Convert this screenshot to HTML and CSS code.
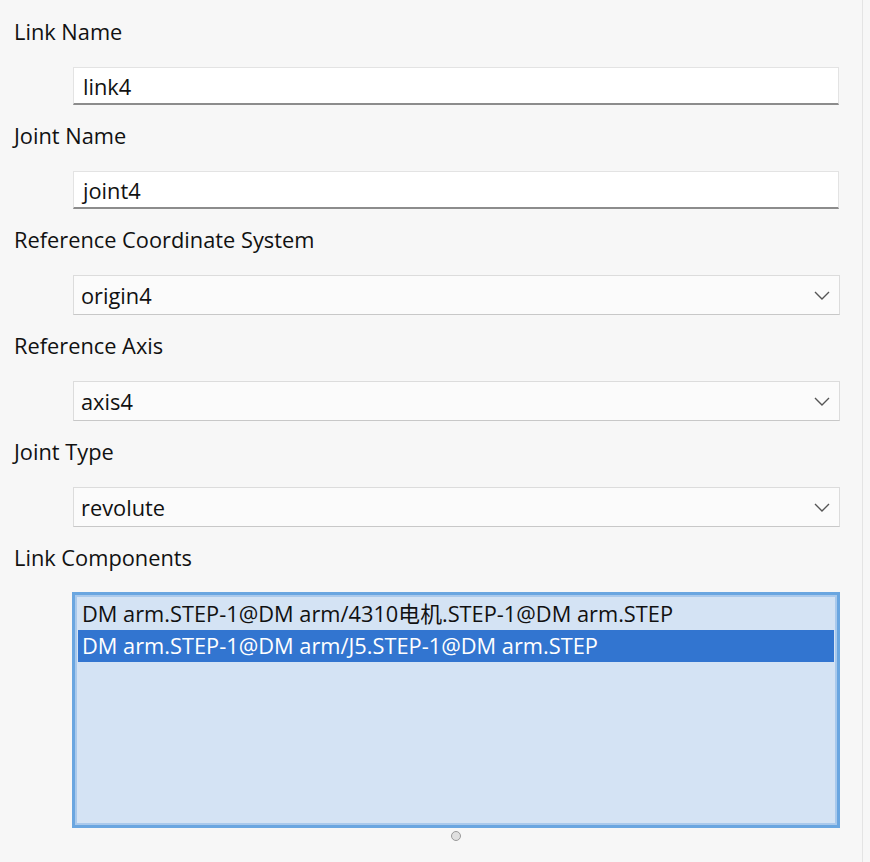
FILE: index.html
```html
<!DOCTYPE html>
<html>
<head>
<meta charset="utf-8">
<link rel="stylesheet" href="styles.css">
</head>
<body>
<div class="panel">
  <div class="field">
    <div class="label">Link Name</div>
    <div class="input">link4</div>
  </div>
  <div class="field">
    <div class="label">Joint Name</div>
    <div class="input">joint4</div>
  </div>
  <div class="field">
    <div class="label">Reference Coordinate System</div>
    <div class="select"><span>origin4</span><svg class="chev" width="16" height="9" viewBox="0 0 16 9"><path d="M1 1 L8 8 L15 1" fill="none" stroke="#555" stroke-width="1.4"/></svg></div>
  </div>
  <div class="field">
    <div class="label">Reference Axis</div>
    <div class="select"><span>axis4</span><svg class="chev" width="16" height="9" viewBox="0 0 16 9"><path d="M1 1 L8 8 L15 1" fill="none" stroke="#555" stroke-width="1.4"/></svg></div>
  </div>
  <div class="field">
    <div class="label">Joint Type</div>
    <div class="select"><span>revolute</span><svg class="chev" width="16" height="9" viewBox="0 0 16 9"><path d="M1 1 L8 8 L15 1" fill="none" stroke="#555" stroke-width="1.4"/></svg></div>
  </div>
  <div class="field">
    <div class="label">Link Components</div>
    <div class="list">
      <div class="row">DM arm.STEP-1@DM arm/4310电机.STEP-1@DM arm.STEP</div>
      <div class="row selected">DM arm.STEP-1@DM arm/J5.STEP-1@DM arm.STEP</div>
    </div>
    <div class="handle-wrap"><div class="handle"></div></div>
  </div>
</div>
</body>
</html>
```
FILE: styles.css
```css
html, body {
  margin: 0;
  padding: 0;
  background: #f7f7f7;
}
body {
  font-family: "Open Sans", "Noto Sans", "Noto Sans CJK SC", sans-serif;
  font-size: 21.8px;
  color: #111111;
  width: 870px;
  height: 862px;
  overflow: hidden;
}
.panel {
  width: 863px;
  height: 862px;
  border-right: 1px solid #e4e4e4;
  box-sizing: border-box;
  padding: 18px 0 0 14px;
  display: flex;
  flex-direction: column;
  gap: 17px;
}
.field {
  display: flex;
  flex-direction: column;
}
.label {
  height: 28px;
  line-height: 28px;
  margin-bottom: 21px;
}
.input, .select {
  margin-left: 59px;
  width: 766px;
  box-sizing: border-box;
  background: #ffffff;
  padding-left: 9px;
  display: flex;
  align-items: center;
}
.input {
  height: 38px;
  border: 1px solid #e3e3e3;
  border-bottom: 2px solid #8c8c8c;
  padding-top: 1px;
}
.select {
  height: 40px;
  width: 767px;
  border: 1px solid #dcdcdc;
  border-bottom-color: #c8c8c8;
  background: #fbfbfb;
  justify-content: space-between;
  padding-right: 9px;
  padding-left: 7px;
}
.list {
  margin-left: 58px;
  width: 768px;
  height: 236px;
  box-sizing: border-box;
  border: 3px solid #6aa6e0;
  box-shadow: inset 0 0 0 2px #a9c9ec;
  background: #d4e3f4;
  padding: 3px 3px;
  margin-top: -1px;
}
.row {
  height: 32px;
  line-height: 32px;
  padding-left: 4px;
  white-space: nowrap;
}
.row.selected {
  background: #3275d0;
  color: #ffffff;
}
.handle-wrap {
  display: flex;
  justify-content: flex-start;
  padding-left: 437px;
  margin-top: 3px;
}
.handle {
  width: 8px;
  height: 8px;
  border-radius: 50%;
  border: 1.5px solid #9a9a9a;
  background: #e0e0e0;
}
```
